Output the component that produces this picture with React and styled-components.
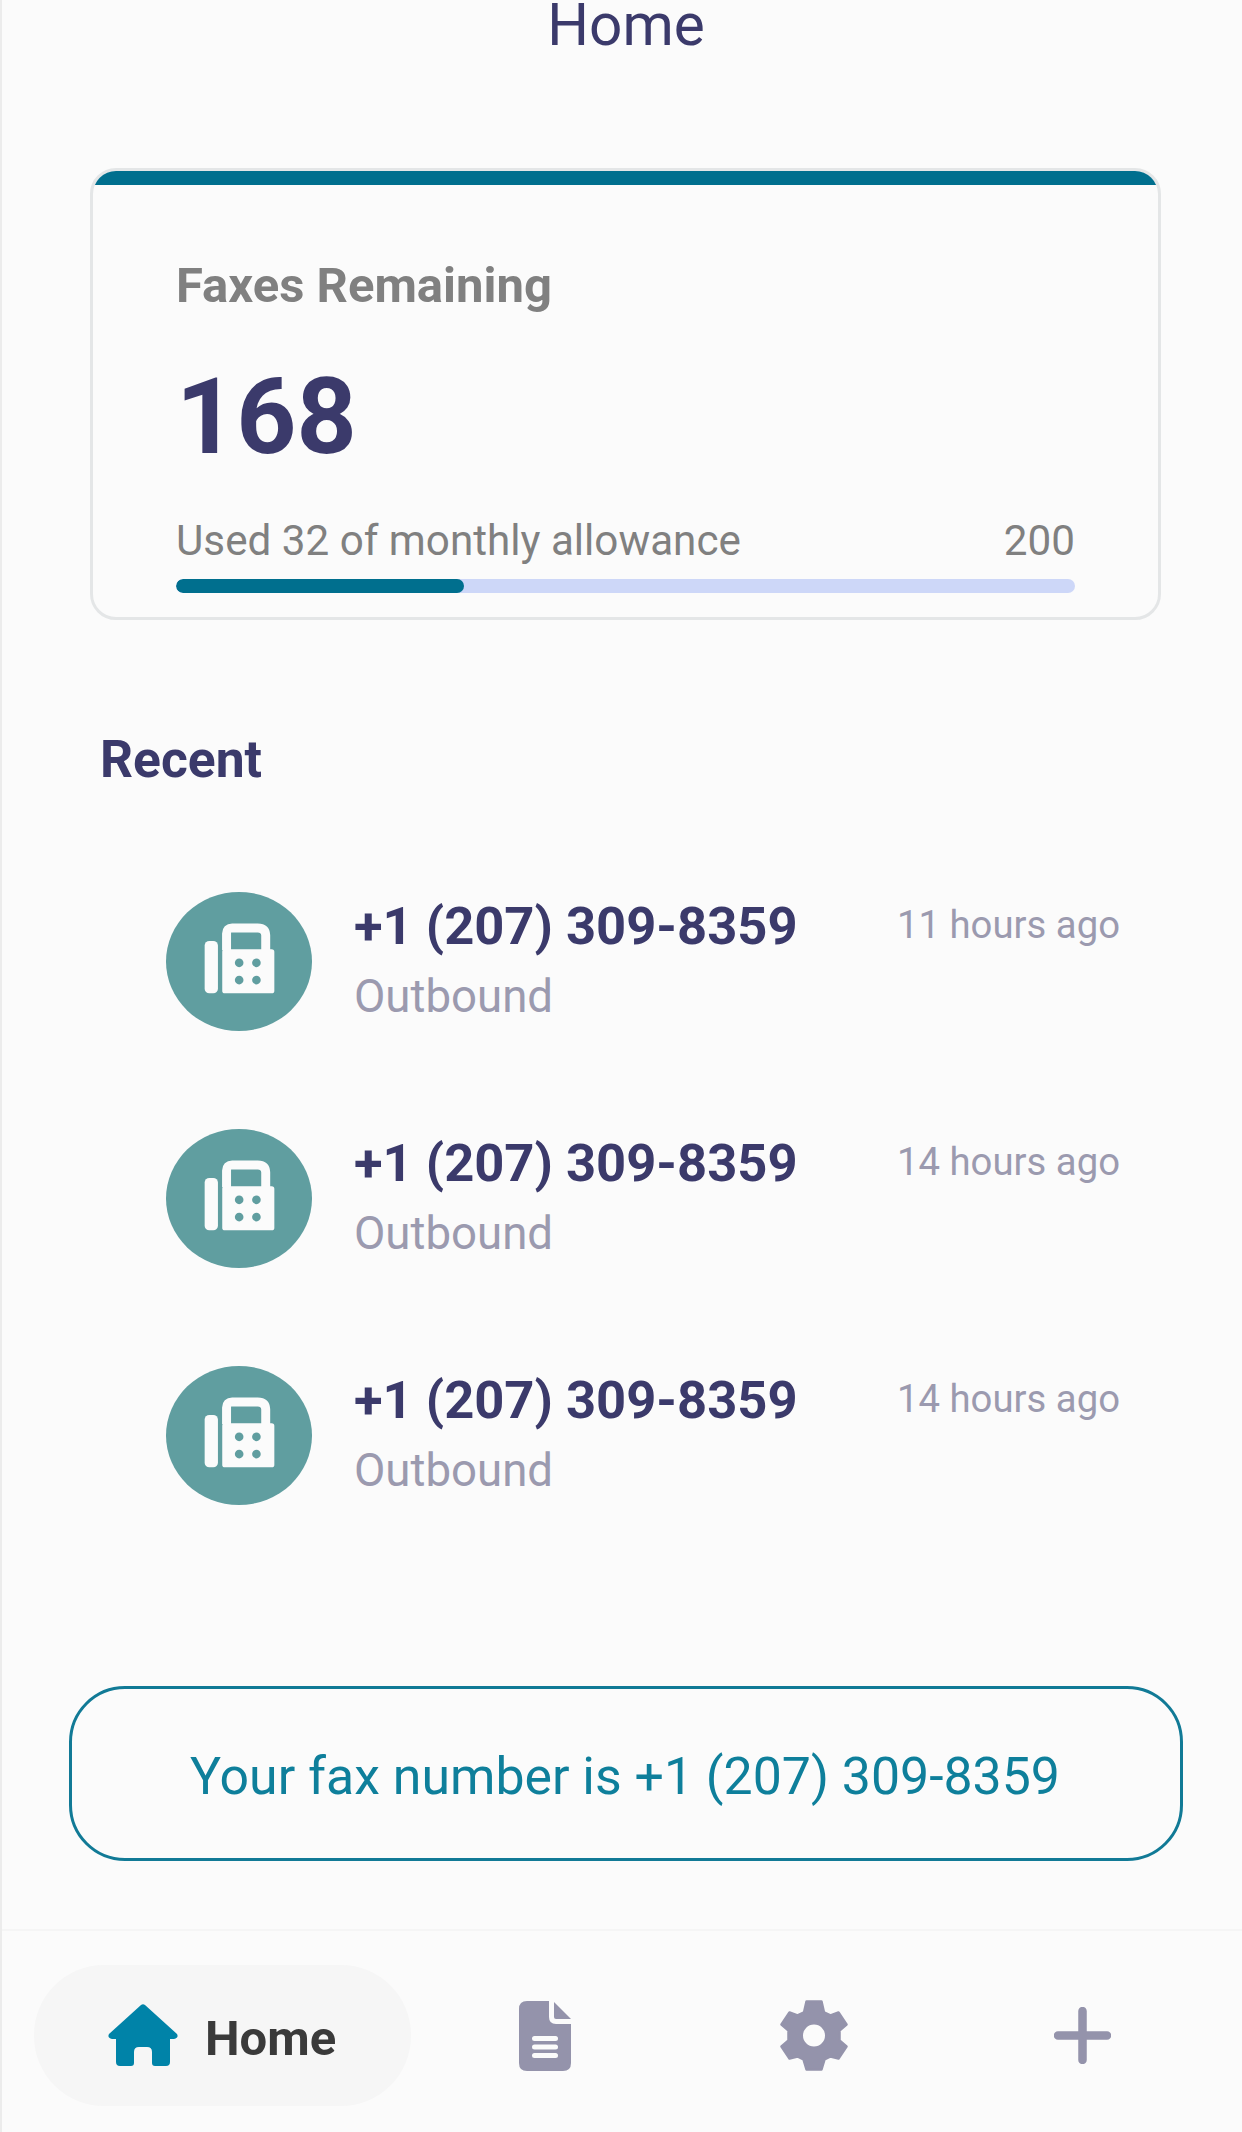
import React from "react";
import styled, { createGlobalStyle } from "styled-components";

const Global = createGlobalStyle`
  html, body { margin: 0; padding: 0; background: #fbfbfb; }
  body { font-family: Roboto, "Liberation Sans", sans-serif; }
`;

const App_ = styled.div`
  box-sizing: border-box;
  width: 1242px;
  height: 2132px;
  overflow: hidden;
  background: #fbfbfb;
  border-left: 2px solid #ececec;
  display: flex;
  flex-direction: column;
`;
const Title = styled.h1`
  margin: 0;
  font-size: 58.5px;
  line-height: 50px;
  height: 48px;
  font-weight: 400;
  color: #3b3a6b;
  text-align: center;
  padding-left: 8px;
`;
const Card = styled.section`
  box-sizing: border-box;
  margin: 120px 0 0 88px;
  width: 1071px;
  height: 452px;
  border: 3px solid #e4e6e7;
  border-radius: 26px;
  overflow: hidden;
`;
const CardBar = styled.div`
  height: 14px;
  background: #006f8e;
`;
const CardBody = styled.div`
  padding: 78px 83px 0 83px;
`;
const CardLabel = styled.div`
  font-size: 49px;
  line-height: 46px;
  font-weight: 700;
  color: #808080;
`;
const CardValue = styled.div`
  margin-top: 56px;
  font-size: 105px;
  line-height: 105px;
  font-weight: 700;
  color: #3b3a6b;
`;
const UsageRow = styled.div`
  margin-top: 50px;
  display: flex;
  justify-content: space-between;
  font-size: 42.2px;
  line-height: 42px;
  color: #808080;
`;
const Track = styled.div`
  margin-top: 17px;
  height: 14px;
  border-radius: 7px;
  background: #cdd7f8;
  overflow: hidden;
`;
const Fill = styled.div`
  height: 100%;
  border-radius: 7px;
  background: #006f8e;
`;
const SectionTitle = styled.h2`
  margin: 115px 0 0 98px;
  font-size: 51.6px;
  line-height: 50px;
  font-weight: 700;
  color: #3b3a6b;
`;
const List = styled.div`
  margin: 107px 0 0 164px;
  width: 954px;
  display: flex;
  flex-direction: column;
  gap: 98px;
`;
const Row = styled.div`
  display: flex;
  align-items: flex-start;
  height: 139px;
`;
const Avatar = styled.div`
  flex: none;
  box-sizing: border-box;
  width: 146px;
  height: 139px;
  padding-bottom: 7px;
  border-radius: 50%;
  background: #609ea0;
  display: flex;
  align-items: center;
  justify-content: center;
`;
const RowText = styled.div`
  flex: 1;
  margin-left: 42px;
  padding-top: 9px;
`;
const Phone = styled.div`
  font-size: 52.5px;
  line-height: 50px;
  font-weight: 700;
  color: #3b3a6b;
`;
const Direction = styled.div`
  margin-top: 23px;
  font-size: 45.6px;
  line-height: 46px;
  color: #9b9aaf;
`;
const Time = styled.div`
  padding-top: 8px;
  font-size: 38.3px;
  line-height: 50px;
  color: #9b9aaf;
`;
const NumberBox = styled.div`
  box-sizing: border-box;
  margin: 181px 0 0 67px;
  width: 1114px;
  height: 175px;
  padding: 5px 2px 0 0;
  border: 3px solid #117a96;
  border-radius: 56px;
  display: flex;
  align-items: center;
  justify-content: center;
  font-size: 51.8px;
  color: #0e7f9b;
`;
const Nav = styled.nav`
  margin-top: 68px;
  flex: 1;
  border-top: 2px solid #f5f5f5;
  padding: 34px 0 0 32px;
  display: flex;
  align-items: flex-start;
`;
const ActiveTab = styled.div`
  box-sizing: border-box;
  width: 377px;
  height: 141px;
  border-radius: 70px;
  background: #f6f6f6;
  padding-left: 74px;
  display: flex;
  align-items: center;
  gap: 27px;
`;
const ActiveLabel = styled.span`
  font-size: 49px;
  line-height: 54px;
  padding-top: 7px;
  font-weight: 700;
  color: #3a3a3a;
`;
const Tab = styled.div`
  width: 268.5px;
  height: 141px;
  display: flex;
  align-items: center;
  justify-content: center;
`;
const Icon = styled.svg`
  display: block;
  flex: none;
`;

const FaxIcon = () => (
  <Icon width="71" height="71" viewBox="190 158 214 214">
    <rect x="192" y="212" width="40" height="158" rx="14" fill="#fbfbfb" />
    <rect x="245" y="237" width="157" height="133" rx="8" fill="#fbfbfb" />
    <path d="M258 240V190Q258 173 275 173H352Q375 173 376 195V240" fill="none" stroke="#fbfbfb" strokeWidth="27" />
    <circle cx="296" cy="278" r="13" fill="#609ea0" />
    <circle cx="348" cy="278" r="13" fill="#609ea0" />
    <circle cx="296" cy="330" r="13" fill="#609ea0" />
    <circle cx="348" cy="330" r="13" fill="#609ea0" />
  </Icon>
);
const HomeIcon = () => (
  <Icon width="70" height="63" viewBox="0 0 70 63">
    <path fill="#0083a8" d="M33 1Q35-.5 37 1L69 30Q71 34 66 35H62V58Q62 62 58 62H47Q44 62 44 59V48Q44 43 39 43H31Q26 43 26 48V59Q26 62 23 62H12Q8 62 8 58V35H4Q-1 34 1 30Z" />
  </Icon>
);
const DocIcon = () => (
  <Icon width="52" height="70" viewBox="0 0 52 70">
    <path fill="#9493ab" d="M8 0H30V16Q30 23 37 23H52V62Q52 70 44 70H8Q0 70 0 62V8Q0 0 8 0Z" />
    <path fill="#9493ab" d="M35 1L52 18H37Q35 18 35 16Z" />
    <rect x="13" y="35" width="26" height="5" rx="2.5" fill="#fbfbfb" />
    <rect x="13" y="43.5" width="26" height="5" rx="2.5" fill="#fbfbfb" />
    <rect x="13" y="52" width="26" height="5" rx="2.5" fill="#fbfbfb" />
  </Icon>
);
const GearIcon = () => (
  <Icon width="68" height="73" viewBox="-1.5 -1.5 68 73">
    <path
      fill="#9493ab"
      fillRule="evenodd"
      stroke="#9493ab"
      strokeWidth="2.5"
      strokeLinejoin="round"
      d="M25 1H40L42.5 12L49 15L57 12L65 24L58 30V40L65 46L57 58L49 56L43 59L40 69H25L22 59L16 56L8 58L0 46L7 40V30L0 24L8 12L16 15L22.5 12ZM32.5 22.75A12.25 12.25 0 1 0 32.5 47.25A12.25 12.25 0 1 0 32.5 22.75Z"
    />
  </Icon>
);
const PlusIcon = () => (
  <Icon width="57" height="57" viewBox="0 0 57 57">
    <path d="M28.5 4V53M4 28.5H53" stroke="#9493ab" strokeWidth="8.5" strokeLinecap="round" fill="none" />
  </Icon>
);

const recent = ["11 hours ago", "14 hours ago", "14 hours ago"];

export default function App() {
  return (
    <App_>
      <Global />
      <Title>Home</Title>
      <Card>
        <CardBar />
        <CardBody>
          <CardLabel>Faxes Remaining</CardLabel>
          <CardValue>168</CardValue>
          <UsageRow>
            <span>Used 32 of monthly allowance</span>
            <span>200</span>
          </UsageRow>
          <Track>
            <Fill style={{ width: `${(32 / 100) * 100}%` }} />
          </Track>
        </CardBody>
      </Card>
      <SectionTitle>Recent</SectionTitle>
      <List>
        {recent.map((t, i) => (
          <Row key={i}>
            <Avatar>
              <FaxIcon />
            </Avatar>
            <RowText>
              <Phone>+1 (207) 309-8359</Phone>
              <Direction>Outbound</Direction>
            </RowText>
            <Time>{t}</Time>
          </Row>
        ))}
      </List>
      <NumberBox>Your fax number is +1 (207) 309-8359</NumberBox>
      <Nav>
        <ActiveTab>
          <HomeIcon />
          <ActiveLabel>Home</ActiveLabel>
        </ActiveTab>
        <Tab><DocIcon /></Tab>
        <Tab><GearIcon /></Tab>
        <Tab><PlusIcon /></Tab>
      </Nav>
    </App_>
  );
}
